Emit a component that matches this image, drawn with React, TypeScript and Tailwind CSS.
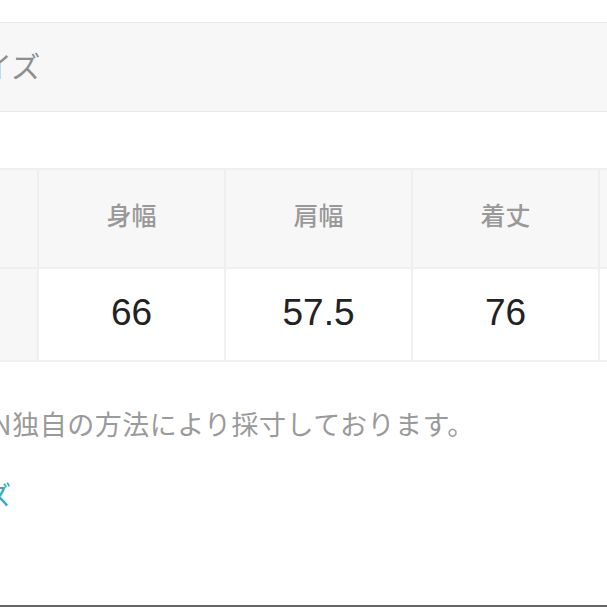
import React from "react";

const headers = ["身幅", "肩幅", "着丈", "袖丈"];
const values = ["66", "57.5", "76", "60"];

const jp = { fontFamily: '"Noto Sans CJK JP", "Liberation Sans", sans-serif' };

const App = () => {
  return (
    <div className="relative h-[607px] w-[607px] overflow-hidden bg-white" style={jp}>
      <div className="ml-[-150px] w-[900px]">
        {/* section title */}
        <div className="mt-[22px] flex h-[90px] items-center border-y border-[#e9e9e9] bg-[#f7f7f7] pl-[104px]">
          <span className="pb-[4px] text-[29px] leading-none text-[#8e8e8e]">サイズ</span>
        </div>

        {/* size table */}
        <div className="mt-[56px] border-y-2 border-[#f0f0f0]">
          <div className="flex h-[97px] bg-[#f7f7f7]">
            <div className="w-[189px] shrink-0 border-r-2 border-[#efefef]" />
            {headers.map((h) => (
              <div
                key={h}
                className="flex w-[187px] shrink-0 items-center justify-center border-r-2 border-[#efefef] pb-[8px] text-[25px] font-medium text-[#999999]"
              >
                {h}
              </div>
            ))}
          </div>
          <div className="flex h-[93px] border-t-2 border-[#efefef]">
            <div className="w-[189px] shrink-0 border-r-2 border-[#efefef] bg-[#f7f7f7]" />
            {values.map((v, i) => (
              <div
                key={i}
                className="flex w-[187px] shrink-0 items-center justify-center border-r-2 border-[#efefef] bg-white pb-[3px] text-[37px] text-[#222222]"
                style={{ fontFamily: '"Liberation Sans", Arial, sans-serif' }}
              >
                {v}
              </div>
            ))}
          </div>
        </div>

        {/* note */}
        <p className="ml-[-18px] mt-[48px] whitespace-nowrap text-[27px] leading-none tracking-[0.5px] text-[#9a9a9a]">
          ※ZOZOTOWN独自の方法により採寸しております。
        </p>

        {/* link */}
        <p className="mt-[44px] w-[161px] whitespace-nowrap text-right text-[26px] leading-none text-[#3aa6c2]">
          サイズ
        </p>
      </div>

      <div className="absolute bottom-0 left-0 h-[2px] w-full bg-[#666666]" />
    </div>
  );
};

export default App;
